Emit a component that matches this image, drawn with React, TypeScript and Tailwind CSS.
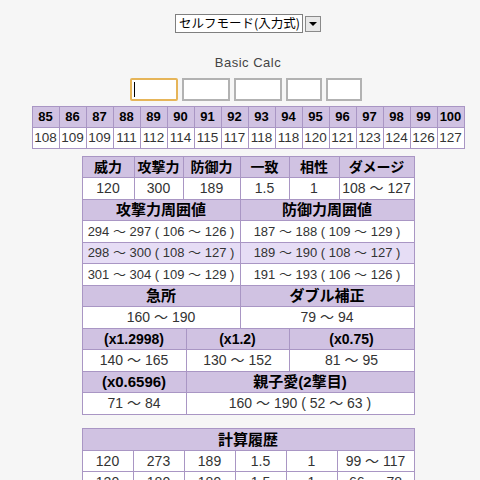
import React from "react";

const levels = [85, 86, 87, 88, 89, 90, 91, 92, 93, 94, 95, 96, 97, 98, 99, 100];
const damages = [108, 109, 109, 111, 112, 114, 115, 117, 118, 118, 120, 121, 123, 124, 126, 127];

const font = "font-['Century_Gothic','Liberation_Sans','Noto_Sans_CJK_JP',sans-serif]";

function Row({
  cols,
  cells,
  head = false,
  hl = false,
  h = "h-[21px]",
  size = "text-[14px]",
}: {
  cols: string;
  cells: string[];
  head?: boolean;
  hl?: boolean;
  h?: string;
  size?: string;
}) {
  const bg = head ? "bg-[#d0c2e2] font-bold text-black" : hl ? "bg-[#e6ddf5] text-[#333]" : "bg-white text-[#333]";
  return (
    <div className={`grid ${cols}`}>
      {cells.map((c, i) => (
        <div
          key={i}
          className={`${h} ${bg} ${size} border-r border-b border-[#a996c4] flex items-center justify-center leading-none whitespace-nowrap overflow-hidden`}
        >
          {c}
        </div>
      ))}
    </div>
  );
}

export default function App() {
  return (
    <div className={`min-h-screen bg-[#f6f6f6] ${font} flex flex-col items-center pl-[16px]`}>
      <div className="mt-[14px] flex items-center">
        <div className="w-[128px] h-[19px] bg-white border border-[#7f7f7f] flex items-center pl-[3px] text-[12.5px] text-black whitespace-nowrap font-['Noto_Sans_CJK_JP',sans-serif]">
          セルフモード(入力式)
        </div>
        <div className="ml-[2px] w-[16px] h-[16px] border border-[#8a8a8a] bg-[#e8e8e8] flex items-center justify-center">
          <div className="w-0 h-0 border-l-[4px] border-r-[4px] border-t-[4px] border-l-transparent border-r-transparent border-t-black" />
        </div>
      </div>

      <div className="mt-[20px] text-[13px] text-[#444] tracking-[0.5px]">Basic Calc</div>

      <div className="mt-[5px] flex gap-[4px] ml-[-4px]">
        <div className="w-[48px] h-[23px] bg-white border-2 border-[#e6b559] rounded-[2px] flex items-center pl-[2px]">
          <div className="w-[1px] h-[15px] bg-black" />
        </div>
        <div className="w-[48px] h-[23px] bg-white border-2 border-[#b2b2b2]" />
        <div className="w-[48px] h-[23px] bg-white border-2 border-[#b2b2b2]" />
        <div className="w-[36px] h-[23px] bg-white border-2 border-[#b2b2b2]" />
        <div className="w-[36px] h-[23px] bg-white border-2 border-[#b2b2b2]" />
      </div>

      <div className="mt-[5px] w-[433px] border-l border-t border-[#a996c4]">
        <Row cols="grid-cols-[repeat(16,27px)]" cells={levels.map(String)} head size="text-[13px]" />
        <Row cols="grid-cols-[repeat(16,27px)]" cells={damages.map(String)} size="text-[13.5px]" />
      </div>

      <div className="mt-[7px] w-[333px] border-l border-t border-[#a996c4]">
        <Row cols="grid-cols-[52px_49px_57px_49px_50px_75px]" cells={["威力", "攻撃力", "防御力", "一致", "相性", "ダメージ"]} head />
        <Row cols="grid-cols-[52px_49px_57px_49px_50px_75px]" cells={["120", "300", "189", "1.5", "1", "108 〜 127"]} h="h-[22px]" />
        <Row cols="grid-cols-[158px_174px]" cells={["攻撃力周囲値", "防御力周囲値"]} head size="text-[15px]" />
        <Row cols="grid-cols-[158px_174px]" cells={["294 〜 297 ( 106 〜 126 )", "187 〜 188 ( 109 〜 129 )"]} h="h-[22px]" size="text-[13px]" />
        <Row cols="grid-cols-[158px_174px]" cells={["298 〜 300 ( 108 〜 127 )", "189 〜 190 ( 108 〜 127 )"]} hl size="text-[13px]" />
        <Row cols="grid-cols-[158px_174px]" cells={["301 〜 304 ( 109 〜 129 )", "191 〜 193 ( 106 〜 126 )"]} h="h-[22px]" size="text-[13px]" />
        <Row cols="grid-cols-[158px_174px]" cells={["急所", "ダブル補正"]} head size="text-[15px]" />
        <Row cols="grid-cols-[158px_174px]" cells={["160 〜 190", "79 〜 94"]} h="h-[22px]" />
        <Row cols="grid-cols-[104px_103px_125px]" cells={["(x1.2998)", "(x1.2)", "(x0.75)"]} head />
        <Row cols="grid-cols-[104px_103px_125px]" cells={["140 〜 165", "130 〜 152", "81 〜 95"]} h="h-[22px]" />
        <Row cols="grid-cols-[104px_228px]" cells={["(x0.6596)", "親子愛(2撃目)"]} head size="text-[15px]" />
        <Row cols="grid-cols-[104px_228px]" cells={["71 〜 84", "160 〜 190 ( 52 〜 63 )"]} h="h-[22px]" />
      </div>

      <div className="mt-[13px] w-[333px] border-l border-t border-[#a996c4]">
        <Row cols="grid-cols-[332px]" cells={["計算履歴"]} head h="h-[22px]" size="text-[15px]" />
        <Row cols="grid-cols-[51px_51px_51px_51px_51px_77px]" cells={["120", "273", "189", "1.5", "1", "99 〜 117"]} />
        <Row cols="grid-cols-[51px_51px_51px_51px_51px_77px]" cells={["120", "180", "189", "1.5", "1", "66 〜 78"]} />
      </div>
    </div>
  );
}
